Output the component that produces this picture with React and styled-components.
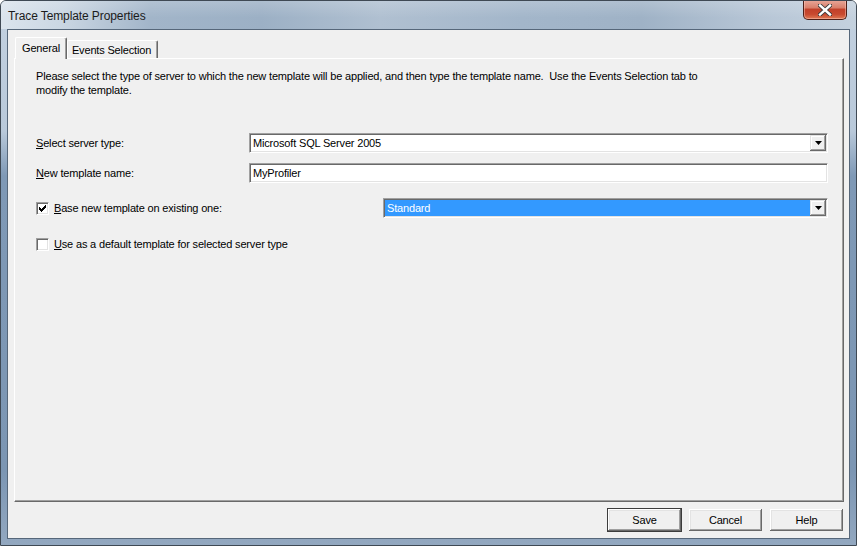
import React from "react";
import styled, { createGlobalStyle } from "styled-components";

const Global = createGlobalStyle`
  html, body { margin: 0; padding: 0; background: #ffffff; }
  body { width: 857px; height: 546px; overflow: hidden; }
  * { box-sizing: border-box; }
`;

const Window = styled.div`
  width: 857px;
  height: 546px;
  border: 1px solid #3f4954;
  border-radius: 6px 6px 0 0;
  background: linear-gradient(
    to bottom,
    #c3d1e0 0px,
    #b9c9da 130px,
    #7f99b6 175px,
    #7c96b3 470px,
    #93a8c0 545px
  );
  display: flex;
  flex-direction: column;
  position: relative;
  overflow: hidden;
  font-family: "Liberation Sans", Arial, sans-serif;
`;

const TitleBar = styled.div`
  height: 28px;
  flex: none;
  display: flex;
  align-items: center;
  padding-left: 7px;
  padding-top: 1px;
  background:
    linear-gradient(to bottom, rgba(255,255,255,0.18), rgba(255,255,255,0) 60%),
    linear-gradient(
      to right,
      #dbe4ed 0px,
      #cbd7e3 60px,
      #a2b5c9 150px,
      #9cb0c5 260px,
      #b0c0d1 380px,
      #a3b6ca 520px,
      #9fb2c6 640px,
      #b7c6d6 760px,
      #c4d1de 855px
    );
`;

const Title = styled.span`
  font-family: "Liberation Sans", Arial, sans-serif;
  font-size: 12px;
  color: #1b1b1b;
  letter-spacing: -0.1px;
`;

const CloseButton = styled.div`
  position: absolute;
  top: -1px;
  right: 9px;
  width: 44px;
  height: 20px;
  border: 1px solid #4d1f18;
  border-top: none;
  border-radius: 0 0 5px 5px;
  background: linear-gradient(
    to bottom,
    #e9a99b 0%,
    #d9806c 40%,
    #c2412a 50%,
    #c8492f 75%,
    #e07a55 100%
  );
  box-shadow: inset 0 0 0 1px rgba(255, 210, 200, 0.45);
  display: flex;
  align-items: center;
  justify-content: center;
`;

const Client = styled.div`
  flex: 1;
  margin: 0 6px 6px 6px;
  border: 1px solid #56677a;
  background: #f0f0f0;
  display: flex;
  flex-direction: column;
  padding: 7px 5px 6px 6px;
  font-size: 11px;
  letter-spacing: -0.17px;
  color: #000;
`;

const TabStrip = styled.div`
  display: flex;
  align-items: flex-end;
  height: 21px;
  flex: none;
  position: relative;
  z-index: 2;
`;

const Tab = styled.div`
  height: ${(p) => (p.$active ? "22px" : "18px")};
  margin-bottom: ${(p) => (p.$active ? "-1px" : "0")};
  margin-left: ${(p) => (p.$active ? "1px" : "0")};
  padding: ${(p) => (p.$active ? "3px 6px 0 6px" : "2px 6px 0 4px")};
  background: #f0f0f0;
  border-top: 1px solid #ffffff;
  border-left: 1px solid #ffffff;
  border-right: 1px solid #696969;
  box-shadow: inset -1px 0 0 #a0a0a0;
  border-radius: 2px 2px 0 0;
  font-size: 11px;
  line-height: 14px;
  white-space: nowrap;
`;

const Panel = styled.div`
  flex: 1;
  border-top: 1px solid #ffffff;
  border-left: 1px solid #ffffff;
  border-right: 1px solid #696969;
  border-bottom: 1px solid #696969;
  box-shadow: inset -1px -1px 0 #a0a0a0;
  padding: 10px 15px 0 21px;
  display: flex;
  flex-direction: column;
`;

const Intro = styled.p`
  margin: 0 0 36px 0;
  line-height: 14px;
  white-space: pre-wrap;
`;

const Row = styled.div`
  display: flex;
  align-items: center;
  height: 20px;
  margin-bottom: ${(p) => p.$gap || 0}px;
`;

const Label = styled.span`
  width: ${(p) => p.$w || 213}px;
  flex: none;
  white-space: nowrap;
`;

const Key = styled.span`
  text-decoration: underline;
  text-underline-offset: 1px;
`;

const Sunken = styled.div`
  flex: 1;
  height: 20px;
  background: #ffffff;
  border-top: 1px solid #a0a0a0;
  border-left: 1px solid #a0a0a0;
  border-right: 1px solid #ffffff;
  border-bottom: 1px solid #ffffff;
  box-shadow: inset 1px 1px 0 #696969, inset -1px -1px 0 #e3e3e3;
  display: flex;
  align-items: stretch;
  padding: 1px 1px 1px 1px;
`;

const FieldText = styled.div`
  flex: 1;
  display: flex;
  align-items: center;
  padding-left: 2px;
  background: ${(p) => (p.$selected ? "#3399ff" : "transparent")};
  color: ${(p) => (p.$selected ? "#ffffff" : "#000000")};
  white-space: nowrap;
  overflow: hidden;
`;

const DropButton = styled.div`
  width: 16px;
  flex: none;
  background: #f0f0f0;
  box-shadow: inset -1px -1px 0 #696969, inset 1px 1px 0 #e3e3e3,
    inset -2px -2px 0 #a0a0a0, inset 2px 2px 0 #ffffff;
  display: flex;
  align-items: center;
  justify-content: center;
`;

const Check = styled.div`
  width: 13px;
  height: 13px;
  flex: none;
  background: #ffffff;
  border-top: 1px solid #a0a0a0;
  border-left: 1px solid #a0a0a0;
  border-right: 1px solid #ffffff;
  border-bottom: 1px solid #ffffff;
  box-shadow: inset 1px 1px 0 #696969, inset -1px -1px 0 #e3e3e3;
  margin-right: 5px;
  display: flex;
  align-items: center;
  justify-content: center;
`;

const ButtonRow = styled.div`
  flex: none;
  display: flex;
  justify-content: flex-end;
  gap: 6px;
  margin-top: 6px;
  height: 24px;
`;

const Button = styled.div`
  width: 75px;
  height: 24px;
  background: #f0f0f0;
  border: 1px solid ${(p) => (p.$default ? "#3c3c3c" : "transparent")};
  box-shadow: inset -1px -1px 0 #696969, inset 1px 1px 0 #ffffff,
    inset -2px -2px 0 #a0a0a0, inset 2px 2px 0 #e3e3e3;
  display: flex;
  align-items: center;
  justify-content: center;
  font-size: 11px;
`;

const Arrow = () => (
  <svg width="7" height="4" viewBox="0 0 7 4">
    <path d="M0 0h7L3.5 4z" fill="#000" />
  </svg>
);

const CheckMark = () => (
  <svg width="7" height="7" viewBox="0 0 7 7">
    <path
      d="M0 2h1v1h1v1h1V3h1V2h1V1h1V0h1v3h-1v1h-1v1h-1v1h-1v1h-1v-1h-1v-1h-1v-1h-1z"
      fill="#000"
    />
  </svg>
);

const CloseX = () => (
  <svg width="14" height="12" viewBox="0 0 14 12">
    <path
      d="M2 1.5L12 10.5M12 1.5L2 10.5"
      stroke="#3b3b3b"
      strokeWidth="4.2"
      strokeLinecap="square"
    />
    <path
      d="M2 1.5L12 10.5M12 1.5L2 10.5"
      stroke="#ffffff"
      strokeWidth="2.4"
      strokeLinecap="square"
    />
  </svg>
);

export default function App() {
  return (
    <>
      <Global />
      <Window>
        <TitleBar>
          <Title>Trace Template Properties</Title>
        </TitleBar>
        <CloseButton>
          <CloseX />
        </CloseButton>
        <Client>
          <TabStrip>
            <Tab $active>General</Tab>
            <Tab>Events Selection</Tab>
          </TabStrip>
          <Panel>
            <Intro>
              {"Please select the type of server to which the new template will be applied, and then type the template name.  Use the Events Selection tab to\nmodify the template."}
            </Intro>
            <Row $gap={10}>
              <Label>
                <Key>S</Key>elect server type:
              </Label>
              <Sunken>
                <FieldText>Microsoft SQL Server 2005</FieldText>
                <DropButton>
                  <Arrow />
                </DropButton>
              </Sunken>
            </Row>
            <Row $gap={15}>
              <Label>
                <Key>N</Key>ew template name:
              </Label>
              <Sunken>
                <FieldText>MyProfiler</FieldText>
              </Sunken>
            </Row>
            <Row $gap={16}>
              <Check>
                <CheckMark />
              </Check>
              <Label $w={329}>
                <Key>B</Key>ase new template on existing one:
              </Label>
              <Sunken>
                <FieldText $selected>Standard</FieldText>
                <DropButton>
                  <Arrow />
                </DropButton>
              </Sunken>
            </Row>
            <Row>
              <Check />
              <Label>
                <Key>U</Key>se as a default template for selected server type
              </Label>
            </Row>
          </Panel>
          <ButtonRow>
            <Button $default>Save</Button>
            <Button>Cancel</Button>
            <Button>Help</Button>
          </ButtonRow>
        </Client>
      </Window>
    </>
  );
}
